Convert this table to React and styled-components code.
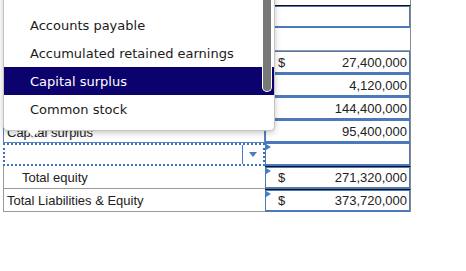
import React from 'react';
import styled, { createGlobalStyle } from 'styled-components';

const GlobalStyle = createGlobalStyle`
  html, body {
    margin: 0;
    padding: 0;
    background: #fff;
    overflow: hidden;
  }
  body {
    font-family: "Liberation Sans", Arial, sans-serif;
  }
`;

const Page = styled.div`
  position: relative;
  width: 466px;
  height: 271px;
  overflow: hidden;
`;

const Sheet = styled.div`
  margin: -18px 0 0 3px;
  display: flex;
  flex-direction: column;
  width: 408px;
`;

const Row = styled.div`
  display: flex;
  height: 23px;
`;

const LabelCell = styled.div`
  box-sizing: border-box;
  width: 262px;
  height: 23px;
  border-left: 1px solid #9a9a9a;
  border-bottom: 1px solid #9a9a9a;
  display: flex;
  align-items: center;
  padding-left: ${p => p.$indent ? 18 : 3}px;
  font-size: 13px;
  color: #222;
`;

const SelectBox = styled.div`
  box-sizing: border-box;
  width: 262px;
  height: 23px;
  border: ${p => p.$focused ? '2px dotted #3f72b9' : '1px solid #5a84c2'};
  display: flex;
  align-items: center;
  font-size: 13px;
  color: #222;
  padding: 2px 0 0 3px;
`;

const SelectText = styled.span`
  flex: 1;
`;

const ArrowPart = styled.div`
  width: 20px;
  align-self: stretch;
  margin-top: -2px;
  border-left: 1px solid #4a7bc0;
  display: flex;
  align-items: center;
  justify-content: center;
  &::after {
    content: '';
    border-left: 4px solid transparent;
    border-right: 4px solid transparent;
    border-top: 5px solid #4a7bc0;
  }
`;

const ValueCell = styled.div`
  position: relative;
  box-sizing: border-box;
  width: 146px;
  height: 23px;
  border-right: 1px solid #8a8a8a;
  border-top: ${p => p.$rule ? '1px solid #111' : 'none'};
  border-bottom: ${p => p.$plain ? '1px solid #9a9a9a' : 'none'};
  display: flex;
`;

const ValueBox = styled.div`
  box-sizing: border-box;
  flex: 1;
  border: 1px solid #4b79bb;
  border-bottom-width: 2px;
  display: flex;
  align-items: center;
  justify-content: space-between;
  padding: 0 2px 0 12px;
  font-size: 13px;
  color: #222;
`;

const Marker = styled.span`
  position: absolute;
  left: 1px;
  top: 1px;
  border-top: 3px solid transparent;
  border-bottom: 3px solid transparent;
  border-left: 5px solid #3d7fd1;
`;

const Popup = styled.div`
  position: absolute;
  left: 3px;
  top: -19px;
  width: 272px;
  box-sizing: border-box;
  padding: 30px 0 7px;
  background: #fff;
  border: 1px solid #c4c4c4;
  border-top: none;
  border-radius: 0 0 5px 5px;
  box-shadow: 0 2px 6px rgba(0, 0, 0, 0.22);
  font-family: "DejaVu Sans", Verdana, sans-serif;
  font-size: 13px;
  z-index: 2;
`;

const Option = styled.div`
  height: 28px;
  display: flex;
  align-items: center;
  padding-left: 26px;
  color: ${p => p.$active ? '#fff' : '#1b1b1b'};
  background: ${p => p.$active ? '#0c026e' : 'transparent'};
`;

const Scrollbar = styled.div`
  position: absolute;
  right: 2px;
  top: 0;
  width: 8px;
  height: 110px;
  background: #787878;
  border: 1px solid #fff;
  border-top: none;
  border-radius: 0 0 5px 5px;
`;

const Notch = styled.div`
  position: absolute;
  left: 25px;
  bottom: -5px;
  width: 8px;
  height: 8px;
  background: #fff;
  transform: rotate(45deg);
  box-shadow: 2px 2px 2px rgba(0, 0, 0, 0.08);
`;

const rows = [
  { box: false },
  { box: true, rule: true },
  { box: false, plain: true },
  { dollar: true, value: '27,400,000', box: true },
  { value: '4,120,000', box: true },
  { value: '144,400,000', box: true },
  { label: 'Capital surplus', value: '95,400,000', box: true, select: true },
  { label: '', box: true, select: true, focused: true, marker: true },
];

const options = ['Accounts payable', 'Accumulated retained earnings', 'Capital surplus', 'Common stock'];

export default function App() {
  return (
    <Page>
      <GlobalStyle />
      <Sheet>
        {rows.map((r, i) => (
          <Row key={i}>
            {r.select ? (
              <SelectBox $focused={r.focused}>
                <SelectText>{r.label}</SelectText>
                {r.focused && <ArrowPart />}
              </SelectBox>
            ) : (
              <LabelCell />
            )}
            <ValueCell $rule={r.rule} $plain={r.plain}>
              {r.box && (
                <ValueBox>
                  <span>{r.dollar ? '$' : ''}</span>
                  <span>{r.value}</span>
                </ValueBox>
              )}
              {r.marker && <Marker />}
            </ValueCell>
          </Row>
        ))}
        <Row>
          <LabelCell $indent>Total equity</LabelCell>
          <ValueCell $rule>
            <ValueBox>
              <span>$</span>
              <span>271,320,000</span>
            </ValueBox>
            <Marker />
          </ValueCell>
        </Row>
        <Row>
          <LabelCell>Total Liabilities &amp; Equity</LabelCell>
          <ValueCell $rule>
            <ValueBox>
              <span>$</span>
              <span>373,720,000</span>
            </ValueBox>
            <Marker />
          </ValueCell>
        </Row>
      </Sheet>
      <Popup>
        {options.map(o => (
          <Option key={o} $active={o === 'Capital surplus'}>{o}</Option>
        ))}
        <Scrollbar />
        <Notch />
      </Popup>
    </Page>
  );
}
